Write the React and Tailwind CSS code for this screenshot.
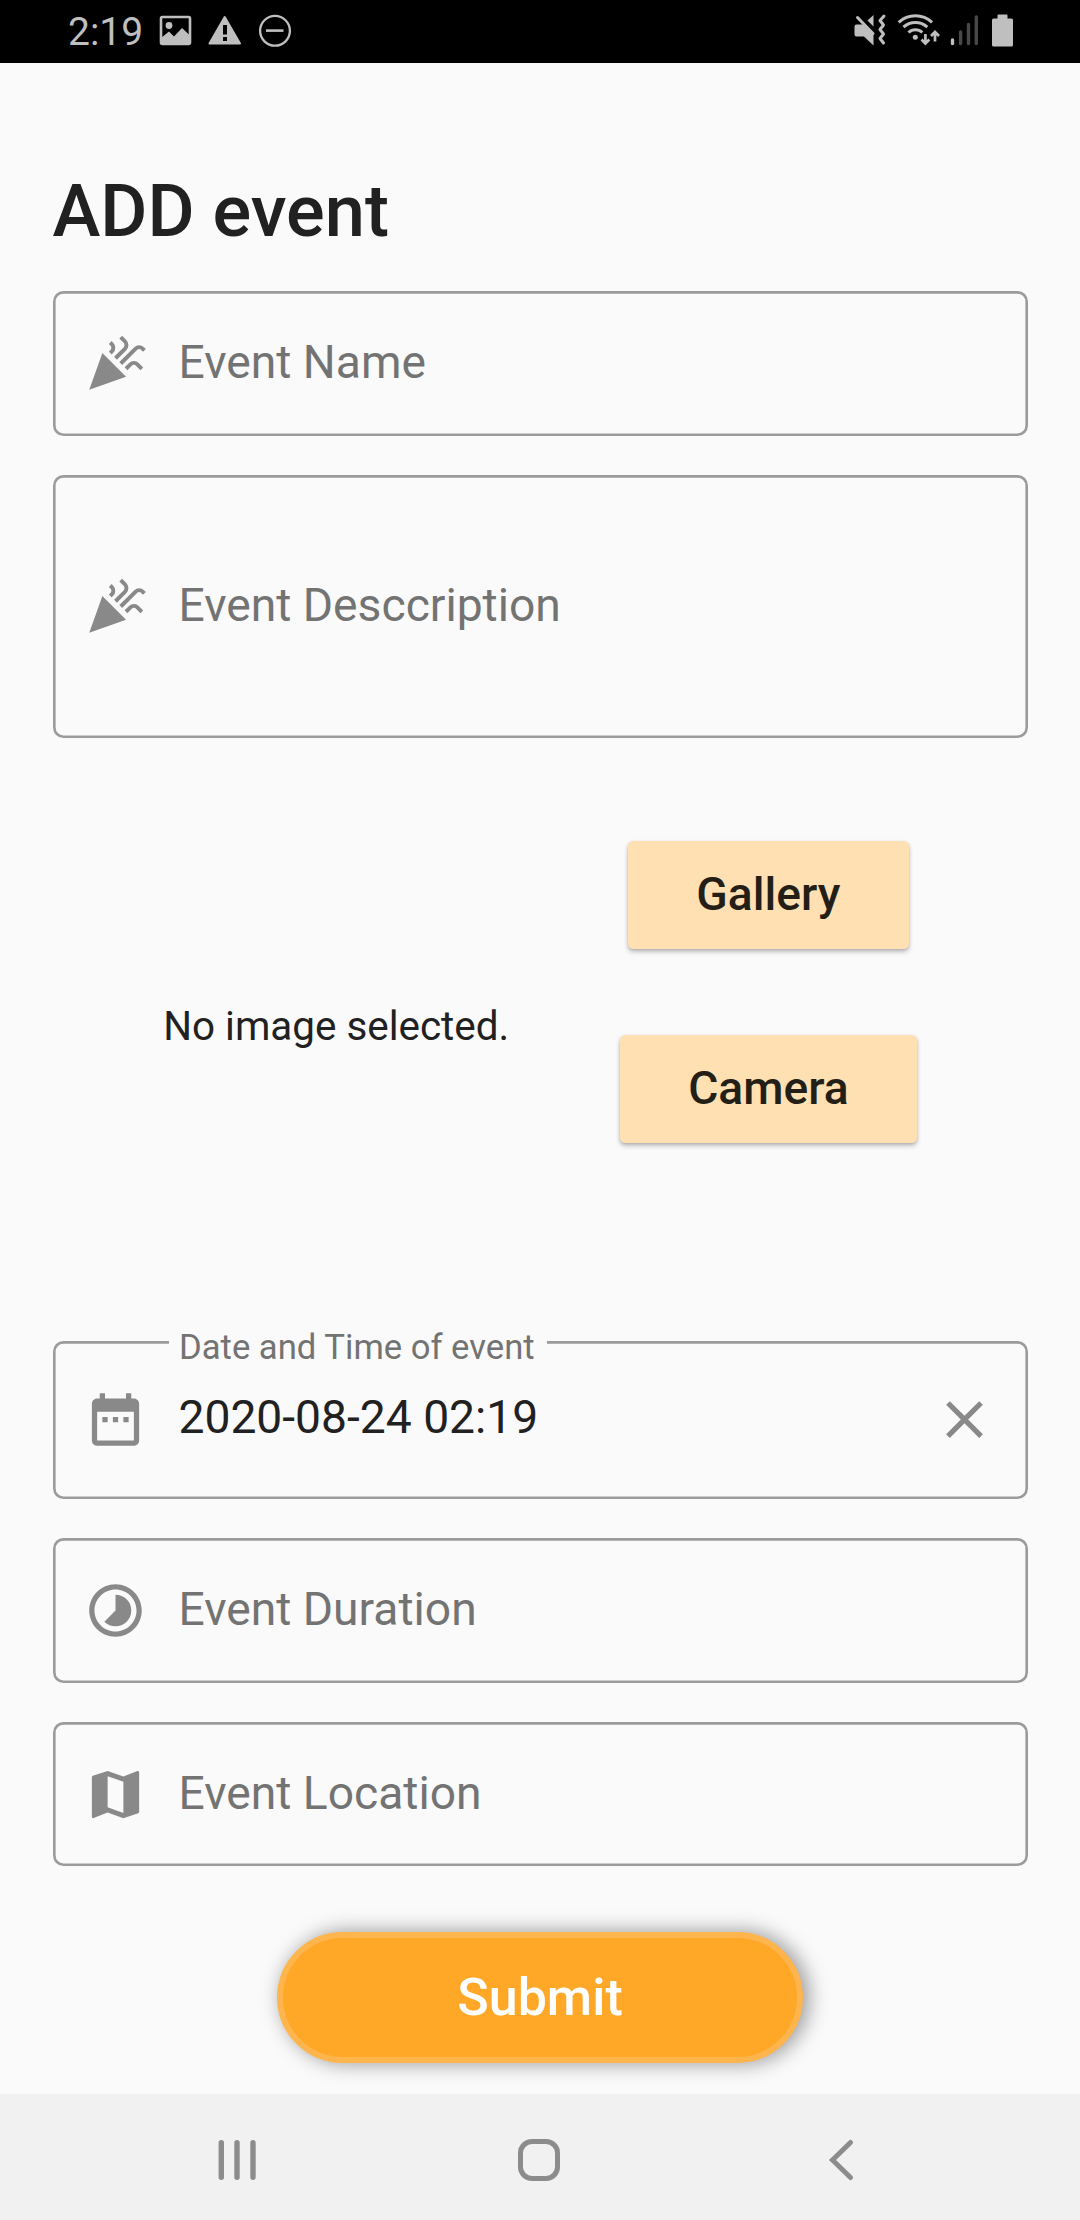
import { MdCelebration, MdDateRange, MdTimelapse, MdMap, MdClear } from "react-icons/md";

function StatusBar() {
  return (
    <header className="flex h-[63px] shrink-0 items-start justify-between bg-black pl-[68px] pr-[66px] text-[#bfbfbf]">
      <div className="flex items-start">
        <span className="mt-[9px] w-[91px] text-[39px] leading-[46px]">2:19</span>
        <svg className="mt-[15px]" width="33" height="32" viewBox="159 15 33 32">
          <rect x="161" y="17" width="29" height="27" rx="1.5" fill="none" stroke="currentColor" strokeWidth="2.6" />
          <circle cx="169" cy="25.5" r="3.4" fill="currentColor" />
          <path d="M161 38l8-6.500 5 5 8-8.500 8 7.500v9h-29z" fill="currentColor" />
        </svg>
        <svg className="ml-[15px] mt-[15px]" width="35" height="32" viewBox="207 15 35 32">
          <path d="M224.700 17L240 43.500H209.500z" fill="currentColor" stroke="currentColor" strokeWidth="2" strokeLinejoin="round" />
          <path d="M223 25h4v9.500h-4zM223 37h4v4h-4z" fill="#000" />
        </svg>
        <svg className="ml-[16px] mt-[14px]" width="34" height="34" viewBox="258 14 34 34">
          <circle cx="275" cy="30.800" r="14.900" fill="none" stroke="currentColor" strokeWidth="2.300" />
          <path d="M266 30.600h17.500" stroke="currentColor" strokeWidth="2.600" />
        </svg>
      </div>
      <div className="flex items-start">
        <svg className="mt-[13px]" width="34" height="35" viewBox="853 13 34 35">
          <path d="M856.500 24.500h7L873.500 34.500V45.500L864 36.500h-7.500q-2 0-2-2v-8q0-2 2-2z" fill="currentColor" />
          <path d="M867.500 20.500L873.500 15v11.500z" fill="currentColor" />
          <path d="M857.500 17.500L873 33.500" stroke="currentColor" strokeWidth="3" strokeLinecap="round" />
          <path d="M884 16l-4 4.500 3.500 4.500-3.500 4.500 3.500 4.500-3.500 4.500 3.500 4.500" fill="none" stroke="currentColor" strokeWidth="3" strokeLinejoin="round" strokeLinecap="round" />
        </svg>
        <svg className="ml-[10px] mt-[12px]" width="44" height="35" viewBox="897 12 44 35">
          <g fill="none" stroke="currentColor" strokeWidth="3">
            <path d="M898.700 22.300a24.500 24.500 0 0 1 33.400 0" />
            <path d="M903.500 27.200a17.500 17.500 0 0 1 23.800 0" />
            <path d="M908.500 32.500a10 10 0 0 1 13.800 0" />
          </g>
          <circle cx="915.300" cy="37.300" r="2.500" fill="currentColor" />
          <path d="M925.400 34v9M921.500 39.500l3.900 4 3.900-4M935 41.500v-9M931 36l4-4 4 4" fill="none" stroke="currentColor" strokeWidth="2.700" />
        </svg>
        <svg className="ml-[9px] mt-[14px]" width="30" height="33" viewBox="950 14 30 33">
          <g strokeWidth="3.400" strokeLinecap="round">
            <path d="M952.500 40v3.500" stroke="currentColor" />
            <path d="M960.600 32v11.500M968.500 24.500v19M976.300 17v26.500" stroke="#484848" />
          </g>
        </svg>
        <svg className="ml-[11px] mt-[13px]" width="23" height="35" viewBox="991 13 23 35">
          <path d="M998.500 14.500h8q1 0 1 1V18.500h4q1.500 0 1.500 1.500v25q0 1.500-1.500 1.500h-18q-1.500 0-1.500-1.500v-25q0-1.500 1.500-1.500h4v-3q0-1 1-1z" fill="currentColor" />
        </svg>
      </div>
    </header>
  );
}

function Field({ icon: Icon, hint, label, value, size = "h-[144.4px]", onClear }) {
  return (
    <div
      className={`relative flex shrink-0 items-center rounded-[10.5px] px-[31.5px] shadow-[inset_0_0_0_2.625px_#9b9b9b] ${size}`}
    >
      {label && (
        <span className="absolute left-[116.5px] top-[-14px] bg-[#fafafa] pl-[10px] pr-[12px] text-[34.65px] leading-[41px] text-[#737373]">
          {label}
        </span>
      )}
      <Icon className="size-[63px] shrink-0 text-[#898989]" />
      <span
        className={`ml-[31.5px] flex-1 text-[46.2px] leading-[54px] ${value ? "pb-[6px] text-[#212121]" : "pb-[3px] text-[#737373]"}`}
      >
        {value || hint}
      </span>
      {onClear && <MdClear className="size-[63px] shrink-0 text-[#898989]" />}
    </div>
  );
}

function PickButton({ children }) {
  return (
    <button className="h-[108px] rounded-[5.25px] bg-[#ffe0b2] px-[68.25px] pb-[1px] text-[46.2px] font-medium leading-[54px] text-[#231f17] shadow-[0_3px_5px_rgba(0,0,0,0.22),0_1px_3px_rgba(0,0,0,0.14)]">
      {children}
    </button>
  );
}

function NavBar() {
  return (
    <nav className="flex h-[126px] shrink-0 items-center bg-[#f1f1f1] pl-[216px] pt-[6px] text-[#8c8c8c]">
      <svg width="42" height="44" viewBox="216 2138 42 44">
        <path d="M221.300 2142.800v34.500M237 2142.800v34.500M253 2142.800v34.500" stroke="currentColor" strokeWidth="5.400" strokeLinecap="round" />
      </svg>
      <svg className="ml-[258px]" width="46" height="44" viewBox="516 2138 46 44">
        <rect x="520.500" y="2141.500" width="37" height="37" rx="11.500" fill="none" stroke="currentColor" strokeWidth="5" />
      </svg>
      <svg className="ml-[265px]" width="28" height="44" viewBox="827 2138 28 44">
        <path d="M850.500 2142.500L832.500 2160l18 17.500" fill="none" stroke="currentColor" strokeWidth="5" strokeLinecap="round" />
      </svg>
    </nav>
  );
}

export default function App() {
  return (
    <div className="flex h-[2220px] w-[1080px] flex-col overflow-hidden bg-[#fafafa] font-['Roboto',sans-serif]">
      <StatusBar />
      <main className="flex flex-1 flex-col px-[52.5px] pt-[106px]">
        <h1 className="text-[72.2px] font-medium leading-[86px] text-[#212121]">ADD event</h1>
        <div className="mt-[36.4px] flex flex-col gap-[39.375px]">
          <Field icon={MdCelebration} hint="Event Name" />
          <Field icon={MdCelebration} hint="Event Desccription" size="h-[262.5px]" />
        </div>
        <section className="flex h-[603.4px] shrink-0 items-start justify-evenly pt-[103.3px]">
          <p className="mt-[161px] text-[40.425px] leading-[49px] text-[#212121]">No image selected.</p>
          <div className="flex flex-col items-center gap-[86px]">
            <PickButton>Gallery</PickButton>
            <PickButton>Camera</PickButton>
          </div>
        </section>
        <div className="flex flex-col gap-[39.375px]">
          <Field icon={MdDateRange} label="Date and Time of event" value="2020-08-24 02:19" size="h-[157.9px]" onClear={() => {}} />
          <Field icon={MdTimelapse} hint="Event Duration" />
          <Field icon={MdMap} hint="Event Location" />
        </div>
        <button className="mt-[65.5px] h-[131.5px] w-[526px] self-center rounded-full border-[6px] border-[#ffb54d] bg-[#ffa726] text-[51.975px] font-medium leading-[60px] text-white shadow-[5px_0_20px_1px_rgba(0,0,0,0.38)]">
          Submit
        </button>
      </main>
      <NavBar />
    </div>
  );
}
